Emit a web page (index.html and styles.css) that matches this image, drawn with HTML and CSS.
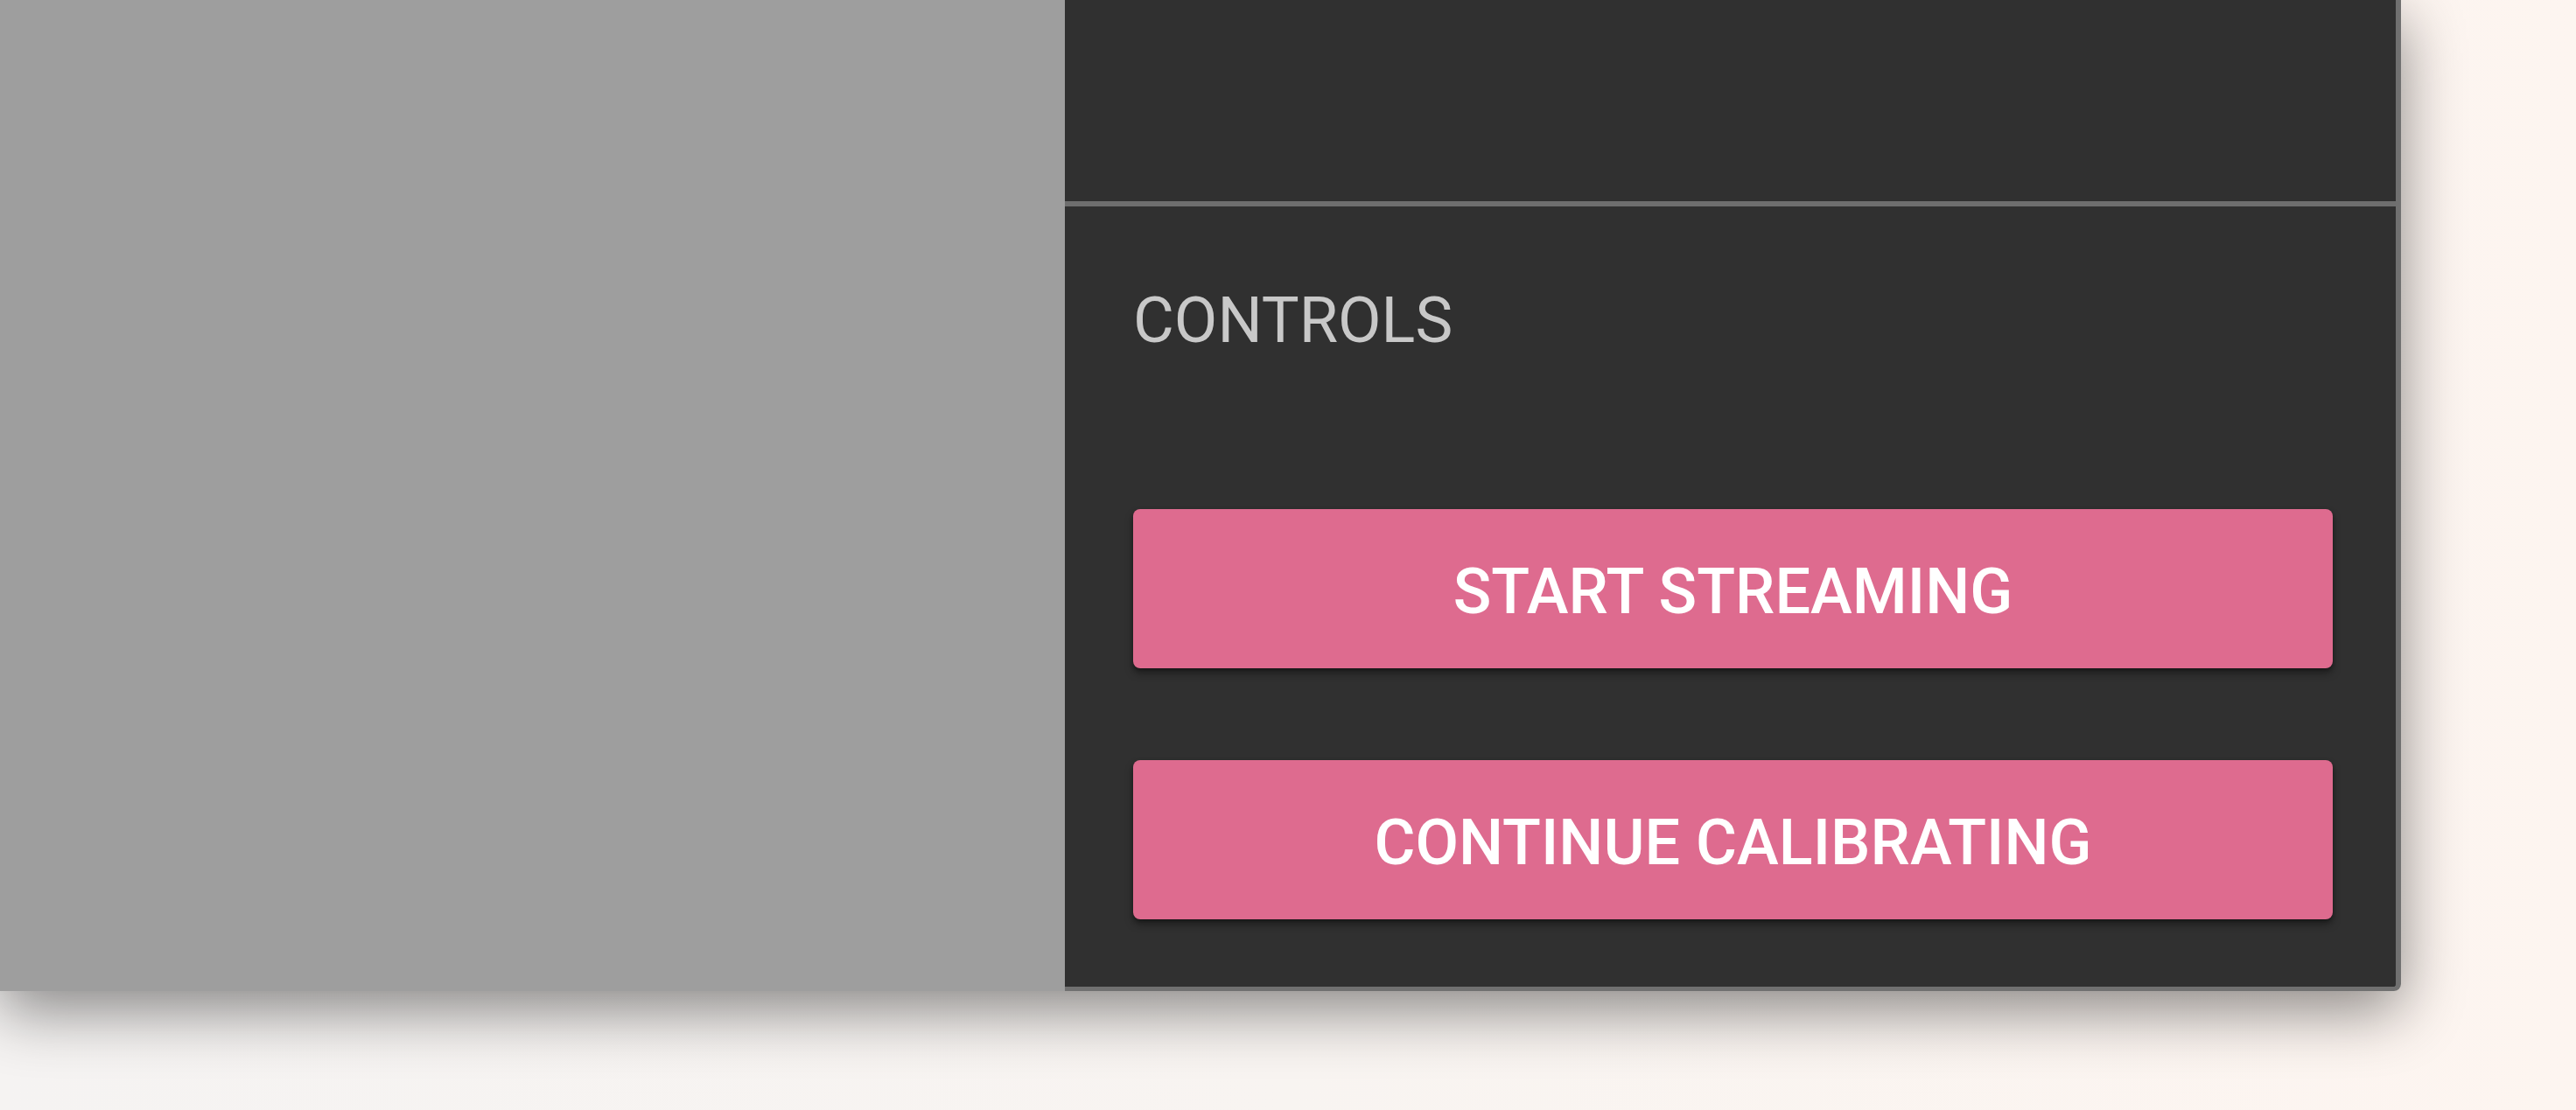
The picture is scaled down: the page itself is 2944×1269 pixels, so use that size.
FILE: index.html
```html
<!DOCTYPE html>
<html lang="en">
<head>
<meta charset="utf-8">
<title>Controls</title>
<link rel="stylesheet" href="styles.css">
</head>
<body>
<div class="app">
  <div class="viewport"></div>
  <aside class="sidebar">
    <div class="sidebar-top"></div>
    <div class="divider"></div>
    <section class="controls">
      <h2 class="controls-title">CONTROLS</h2>
      <div class="buttons">
        <button class="btn">START STREAMING</button>
        <button class="btn">CONTINUE CALIBRATING</button>
      </div>
    </section>
  </aside>
</div>
</body>
</html>
```
FILE: styles.css
```css
html, body {
  margin: 0;
  padding: 0;
}
body {
  width: 2944px;
  height: 1269px;
  overflow: hidden;
  background: linear-gradient(90deg, #f5f3f2 0%, #f8f4f1 50%, #fdf5f0 100%);
  font-family: Roboto, "Noto Sans", "Liberation Sans", sans-serif;
}
.app {
  display: flex;
  width: 2744px;
  height: 1133px;
  box-shadow: 0 22px 70px rgba(0, 0, 0, 0.45);
  border-bottom-right-radius: 8px;
}
.viewport {
  width: 1217px;
  background: #9e9e9e;
}
.sidebar {
  flex: 1;
  display: flex;
  flex-direction: column;
  background: #303030;
  border-right: 6px solid #707070;
  border-bottom: 5px solid #707070;
  border-bottom-right-radius: 8px;
}
.sidebar-top {
  height: 230px;
}
.divider {
  height: 6px;
  background: #6e6e6e;
}
.controls {
  padding: 95px 72px 0 78px;
}
.controls-title {
  margin: 0;
  font-size: 72px;
  line-height: 1;
  font-weight: 400;
  color: #c8c8c8;
}
.buttons {
  margin-top: 179px;
  display: flex;
  flex-direction: column;
  gap: 105px;
}
.btn {
  height: 182px;
  border: none;
  border-radius: 8px;
  background: #de6b8f;
  color: #ffffff;
  font-family: Roboto, "Noto Sans", "Liberation Sans", sans-serif;
  font-size: 72px;
  font-weight: 500;
  letter-spacing: 0;
  box-shadow: 0 6px 10px rgba(0, 0, 0, 0.35), 0 2px 4px rgba(0, 0, 0, 0.3);
  padding: 6px 0 0 0;
}
```
